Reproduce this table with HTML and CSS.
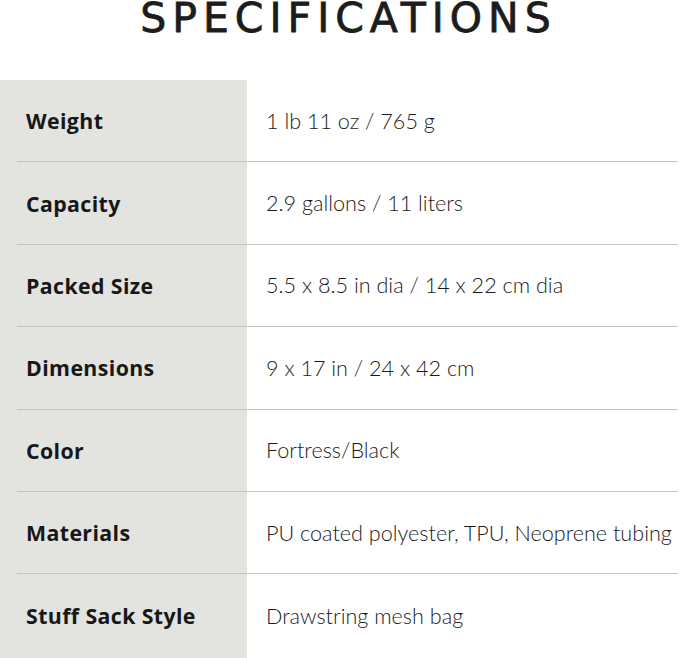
FILE: index.html
```html
<!DOCTYPE html>
<html>
<head>
<meta charset="utf-8">
<link rel="stylesheet" href="styles.css">
</head>
<body>
<h1 class="title">SPECIFICATIONS</h1>
<div class="specs">
  <div class="row"><div class="label">Weight</div><div class="value">1 lb 11 oz / 765 g</div></div>
  <div class="row"><div class="label">Capacity</div><div class="value">2.9 gallons / 11 liters</div></div>
  <div class="row"><div class="label">Packed Size</div><div class="value">5.5 x 8.5 in dia / 14 x 22 cm dia</div></div>
  <div class="row"><div class="label">Dimensions</div><div class="value">9 x 17 in / 24 x 42 cm</div></div>
  <div class="row"><div class="label">Color</div><div class="value">Fortress/Black</div></div>
  <div class="row"><div class="label">Materials</div><div class="value">PU coated polyester, TPU, Neoprene tubing</div></div>
  <div class="row last"><div class="label">Stuff Sack Style</div><div class="value">Drawstring mesh bag</div></div>
</div>
</body>
</html>
```
FILE: styles.css
```css
html, body {
  margin: 0;
  padding: 0;
  background: #ffffff;
  color: #1b1b1b;
}
body {
  width: 679px;
  height: 658px;
  overflow: hidden;
}
.title {
  margin: 0;
  height: 80px;
  text-align: center;
  font-family: "DejaVu Sans", sans-serif;
  font-weight: normal;
  font-size: 41px;
  line-height: 36px;
  letter-spacing: 6px;
  padding-left: 18px;
  -webkit-text-stroke: 0.8px #1c1c1c;
  color: #1c1c1c;
}
.specs {
  background: linear-gradient(to right, #e3e3df 247px, #ffffff 247px);
  padding: 0 1px 0 17px;
  height: 578px;
}
.row {
  display: flex;
  align-items: center;
  height: 82.4px;
  box-sizing: border-box;
  border-bottom: 1px solid #c4c4c2;
}
.row.last {
  border-bottom: none;
}
.label {
  width: 230px;
  padding-left: 9px;
  box-sizing: border-box;
  font-family: "Open Sans", sans-serif;
  font-weight: 700;
  font-size: 21.3px;
  letter-spacing: 0.4px;
  color: #171717;
}
.value {
  padding-left: 19px;
  font-family: "Lato", sans-serif;
  font-weight: 300;
  font-size: 21.6px;
  color: #1b1b1b;
  white-space: nowrap;
}
```
